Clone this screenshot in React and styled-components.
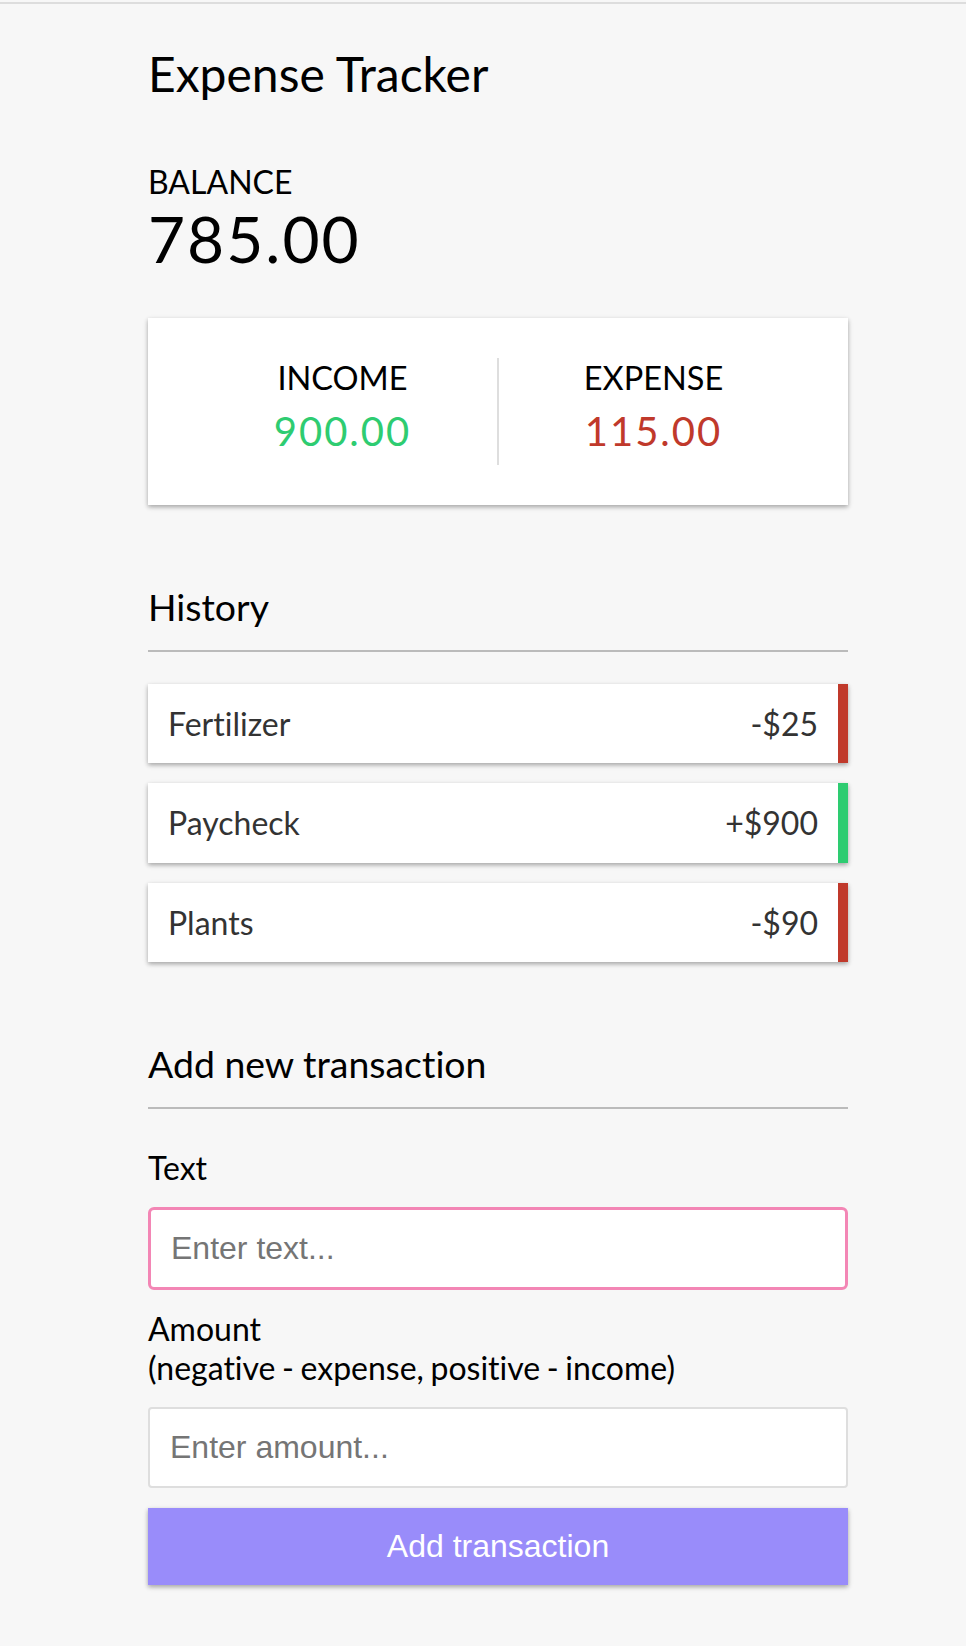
import React from "react";
import styled, { createGlobalStyle } from "styled-components";

const GlobalStyle = createGlobalStyle`
  * { box-sizing: border-box; }
  html, body {
    margin: 0;
    padding: 0;
    background: #f7f7f7;
  }
  body {
    font-family: "Lato", "Noto Sans", sans-serif;
    font-variant-ligatures: none;
    font-feature-settings: "liga" 0, "clig" 0;
    color: #000;
  }
`;

const TopRule = styled.div`
  height: 2px;
  margin-top: 2px;
  background: #dddddd;
`;

const Container = styled.div`
  width: 700px;
  margin: 0 0 0 148px;
  padding-bottom: 60px;
`;

const Title = styled.h2`
  margin: 41px 0 0;
  font-size: 48px;
  line-height: 57.6px;
  font-weight: 400;
`;

const BalanceLabel = styled.h4`
  margin: 60px 0 0;
  font-size: 32px;
  line-height: 38.4px;
  font-weight: 400;
  text-transform: uppercase;
`;

const BalanceValue = styled.h1`
  margin: 0;
  font-size: 64px;
  line-height: 76.8px;
  font-weight: 400;
  letter-spacing: 2px;
`;

const SummaryCard = styled.div`
  margin-top: 40px;
  background: #fff;
  box-shadow: 0 2px 6px rgba(0, 0, 0, 0.12), 0 2px 4px rgba(0, 0, 0, 0.24);
  padding: 40px;
  display: flex;
`;

const SummaryCol = styled.div`
  flex: 1;
  text-align: center;
  border-right: ${(p) => (p.$divider ? "2px solid #dedede" : "none")};
`;

const SummaryLabel = styled.h4`
  margin: 0;
  font-size: 32.5px;
  line-height: 39.5px;
  font-weight: 400;
  text-transform: uppercase;
`;

const Money = styled.p`
  margin: 10px 0;
  font-size: 40px;
  line-height: 48px;
  letter-spacing: 2px;
  color: ${(p) => (p.$plus ? "#2ecc71" : "#c0392b")};
`;

const SectionHeading = styled.h3`
  margin: 80px 0 ${(p) => p.$mb || "20px"};
  font-size: 37.44px;
  line-height: 44.9px;
  font-weight: 400;
  padding-bottom: 20px;
  border-bottom: 2px solid #bbb;
`;

const List = styled.ul`
  list-style: none;
  padding: 0;
  margin: 0;
  display: flex;
  flex-direction: column;
  gap: 20px;
`;

const Item = styled.li`
  background: #fff;
  box-shadow: 0 2px 6px rgba(0, 0, 0, 0.12), 0 2px 4px rgba(0, 0, 0, 0.24);
  color: #333;
  display: flex;
  justify-content: space-between;
  padding: 20px;
  font-size: 32px;
  line-height: 39.2px;
  border-right: 10px solid ${(p) => (p.$plus ? "#2ecc71" : "#c0392b")};
`;

const Form = styled.form`
  display: flex;
  flex-direction: column;
`;

const FieldLabel = styled.label`
  display: block;
  margin: 20px 0;
  font-size: 32px;
  line-height: 38.4px;
  word-spacing: -1.6px;
`;

const Input = styled.input`
  display: block;
  width: 100%;
  font-family: "Liberation Sans", Arial, sans-serif;
  font-size: 32px;
  padding: 20px;
  border: ${(p) => (p.$focused ? "3px solid #f386b5" : "2px solid #dedede")};
  border-radius: ${(p) => (p.$focused ? "6px" : "4px")};
  background: #fff;
  color: #000;
  outline: none;
  &::placeholder {
    color: #757575;
  }
`;

const Button = styled.button`
  display: block;
  width: 100%;
  margin-top: 20px;
  padding: 20px;
  border: 0;
  background: #998cfa;
  color: #fff;
  font-family: "Liberation Sans", Arial, sans-serif;
  font-size: 32px;
  line-height: 36.8px;
  box-shadow: 0 2px 6px rgba(0, 0, 0, 0.12), 0 2px 4px rgba(0, 0, 0, 0.24);
  cursor: pointer;
`;

const transactions = [
  { id: 1, text: "Fertilizer", amount: -25 },
  { id: 2, text: "Paycheck", amount: 900 },
  { id: 3, text: "Plants", amount: -90 },
];

export default function App() {
  const income = transactions.filter((t) => t.amount > 0).reduce((a, t) => a + t.amount, 0);
  const expense = transactions.filter((t) => t.amount < 0).reduce((a, t) => a - t.amount, 0);
  const balance = income - expense;
  return (
    <>
      <GlobalStyle />
      <TopRule />
      <Container>
        <Title>Expense Tracker</Title>
        <BalanceLabel>Balance</BalanceLabel>
        <BalanceValue>{balance.toFixed(2)}</BalanceValue>
        <SummaryCard>
          <SummaryCol $divider>
            <SummaryLabel>Income</SummaryLabel>
            <Money $plus>{income.toFixed(2)}</Money>
          </SummaryCol>
          <SummaryCol>
            <SummaryLabel>Expense</SummaryLabel>
            <Money>{expense.toFixed(2)}</Money>
          </SummaryCol>
        </SummaryCard>
        <SectionHeading $mb="32px">History</SectionHeading>
        <List>
          {transactions.map((t) => (
            <Item key={t.id} $plus={t.amount > 0}>
              <span>{t.text}</span>
              <span>
                {t.amount > 0 ? "+" : "-"}${Math.abs(t.amount)}
              </span>
            </Item>
          ))}
        </List>
        <SectionHeading>Add new transaction</SectionHeading>
        <Form onSubmit={(e) => e.preventDefault()}>
          <FieldLabel htmlFor="text">Text</FieldLabel>
          <Input id="text" type="text" placeholder="Enter text..." $focused />
          <FieldLabel htmlFor="amount">
            Amount <br />
            (negative - expense, positive - income)
          </FieldLabel>
          <Input id="amount" type="number" placeholder="Enter amount..." />
          <Button type="submit">Add transaction</Button>
        </Form>
      </Container>
    </>
  );
}
